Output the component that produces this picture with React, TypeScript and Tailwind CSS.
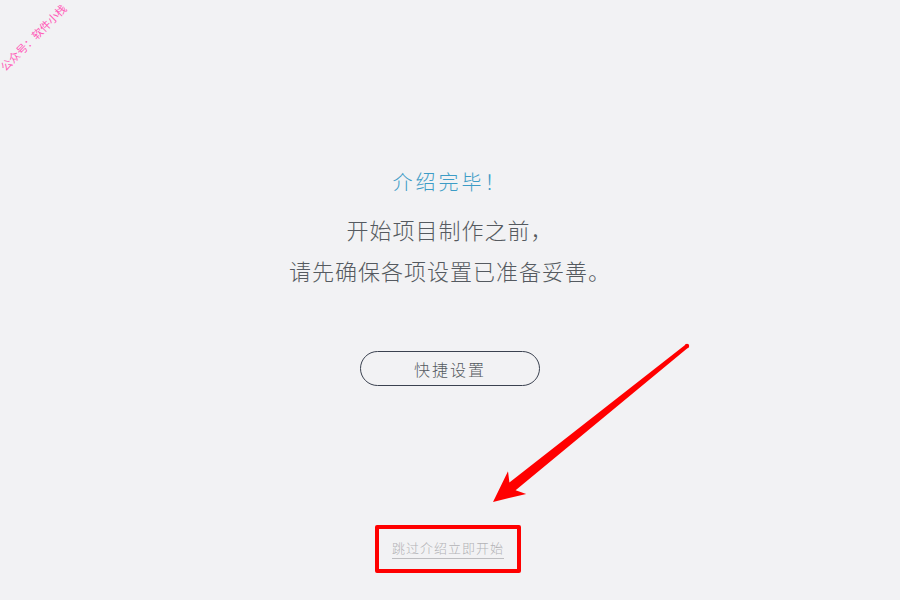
export default function App() {
  return (
    <div
      className="relative w-[900px] h-[600px] overflow-hidden bg-[#f2f2f4] flex flex-col items-center pt-[168px]"
      style={{ fontFamily: '"Noto Sans CJK SC", "Noto Sans", sans-serif' }}
    >
      {/* watermark */}
      <div className="absolute left-[-11px] top-[30px] -rotate-45 text-[11px] leading-[14px] text-[#ff5cb8] whitespace-nowrap">
        公众号：软件小栈
      </div>

      <h1 className="text-[20px] leading-[28px] tracking-[3px] font-light text-[#3d9cc6]">介绍完毕！</h1>

      <div className="mt-[13px] text-center text-[22px] leading-[41px] tracking-[1px] font-light text-[#555a60]">
        <p>开始项目制作之前，</p>
        <p>请先确保各项设置已准备妥善。</p>
      </div>

      <button className="mt-[60px] w-[180px] h-[35px] rounded-full border border-[#3b4250] text-[16px] tracking-[2px] font-light text-[#555a60]">
        快捷设置
      </button>

      {/* skip link, boxed in red */}
      <div className="mt-[139px] mr-[4px] w-[146px] h-[48px] border-4 border-[#ff0000] rounded-[2px] flex items-center justify-center">
        <span className="block text-[13px] leading-[18px] tracking-[1px] font-light text-[#b3b3b6] pb-[1px] border-b border-[#bdbdc0]">
          跳过介绍立即开始
        </span>
      </div>

      {/* red arrow */}
      <svg className="absolute left-0 top-0 pointer-events-none" width="900" height="600">
        <polygon
          fill="#ff0000"
          points="493,502 526.2,493.9 515.6,490.2 688.3,347.6 685.7,344.4 509.4,482.4 508,471.3"
        />
        <circle cx="687" cy="346" r="2.2" fill="#ff0000" />
      </svg>
    </div>
  );
}
